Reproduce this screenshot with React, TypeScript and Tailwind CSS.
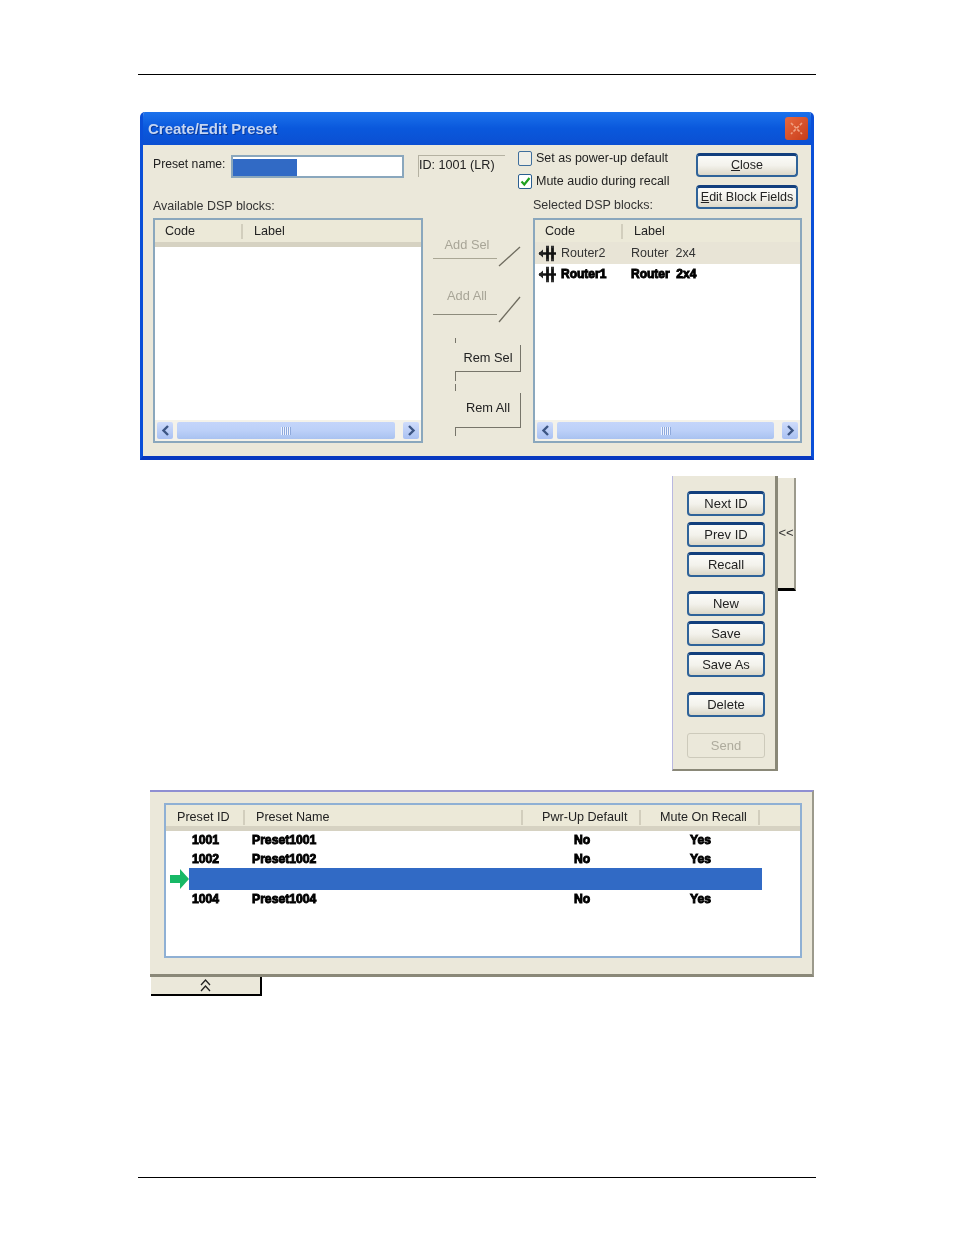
import React from "react";

const font = "font-['Liberation_Sans',Arial,sans-serif]";
const xpBtn =
  "flex items-center justify-center rounded-[4px] border-2 border-[#2f6399] border-t-[3px] border-t-[#123f7d] bg-gradient-to-b from-[#fbfbf8] via-[#f3f2ec] to-[#dcd8c9] text-[12.5px] text-[#222]";
const heavy = "font-bold text-black [-webkit-text-stroke:0.9px_black]";

function RouterIcon() {
  return (
    <svg width="19" height="19" viewBox="0 0 19 19" className="shrink-0">
      <path d="M1 9.5h17" stroke="#111" strokeWidth="2.6" />
      <path d="M5 5.5 0.5 9.5 5 13.5z" fill="#222" />
      <path d="M9.5 3v13M14.5 3v13" stroke="#111" strokeWidth="2.8" />
      <path d="M8 3h9M8 16h9" stroke="#333" strokeWidth="2.4" strokeDasharray="3 2" />
    </svg>
  );
}

function Scrollbar() {
  const arrowBtn = "flex h-[17px] w-[16px] items-center justify-center rounded-[2px] bg-gradient-to-b from-[#cfdcfb] to-[#a9c1f2]";
  return (
    <div className="flex h-[21px] items-center gap-[2px] bg-[#f4f2ea] px-[2px]">
      <div className={arrowBtn}>
        <svg width="9" height="11" viewBox="0 0 9 11"><path d="M7 1 2.5 5.5 7 10" fill="none" stroke="#3d5684" strokeWidth="2.4" /></svg>
      </div>
      <div className="ml-[2px] mr-[6px] flex h-[17px] flex-1 items-center justify-center rounded-[2px] bg-gradient-to-b from-[#c4d5fa] via-[#bcd0f8] to-[#a9c2f0]">
        <div className="h-[8px] w-[10px] bg-[repeating-linear-gradient(90deg,#eef3ff_0_1px,#8ea9dc_1px_2px)]" />
      </div>
      <div className={arrowBtn}>
        <svg width="9" height="11" viewBox="0 0 9 11"><path d="M2 1 6.5 5.5 2 10" fill="none" stroke="#3d5684" strokeWidth="2.4" /></svg>
      </div>
    </div>
  );
}

function HeaderCell({ w, label, sep = true, pad = "pl-[10px]" }: { w: string; label: string; sep?: boolean; pad?: string }) {
  return (
    <div className={`flex h-full items-center ${w}`}>
      <span className={`flex-1 truncate text-[12.6px] text-[#222] ${pad}`}>{label}</span>
      {sep && <span className="h-[15px] w-[2px] bg-[#d2cebd]" />}
    </div>
  );
}

function ListBox({ children, wide }: { children?: React.ReactNode; wide: boolean }) {
  return (
    <div className={`flex h-[225px] flex-col border-2 border-[#8aa7bd] bg-white ${wide ? "w-[270px]" : "w-[269px]"}`}>
      <div className="flex h-[22px] shrink-0 items-center bg-[#ece9d8]">
        <HeaderCell w="w-[88px]" label="Code" />
        <HeaderCell w="w-[120px]" label="Label" sep={false} pad="pl-[11px]" />
      </div>
      <div className="h-[5px] shrink-0 bg-[#d6d2c2]" />
      <div className="flex-1">{children}</div>
      <Scrollbar />
    </div>
  );
}

function Diagonal({ h }: { h: number }) {
  return (
    <svg width="24" height={h} viewBox={`0 0 24 ${h}`} className="shrink-0">
      <path d={`M1 ${h - 1}L22 1`} stroke="#6e6b5e" strokeWidth="1.3" />
    </svg>
  );
}

function Tick({ h }: { h: string }) {
  return <div className={`ml-[22px] w-px bg-[#77756a] ${h}`} />;
}

function Middle() {
  return (
    <div className="flex w-[110px] flex-col pl-[10px] pt-[19px]">
      <div className="flex h-[22px] items-start">
        <div className="flex h-[22px] w-[64px] justify-center border-b border-[#aaa795] pl-[4px] text-[12.8px] leading-[16px] text-[#a8a597]">Add Sel</div>
        <div className="ml-[1px] mt-[9px]"><Diagonal h={21} /></div>
      </div>
      <div className="mt-[28px] flex h-[28px] items-start">
        <div className="flex h-[28px] w-[64px] justify-center border-b border-[#8d8b7c] pl-[4px] pt-[1px] text-[12.8px] leading-[16px] text-[#a8a597]">Add All</div>
        <div className="ml-[1px] mt-[9px]"><Diagonal h={27} /></div>
      </div>
      <div className="mt-[23px]"><Tick h="h-[5px]" /></div>
      <div className="ml-[22px] mt-[2px] flex h-[27px] w-[66px] items-center justify-center border-b border-r border-[#77756a] pl-[1px] text-[12.8px] text-[#222]">Rem Sel</div>
      <Tick h="h-[9px]" />
      <div className="mt-[3px]"><Tick h="h-[7px]" /></div>
      <div className="ml-[22px] mt-[2px] flex h-[35px] w-[66px] items-center justify-center border-b border-r border-[#77756a] pb-[4px] pl-[1px] text-[12.8px] text-[#222]">Rem All</div>
      <Tick h="h-[8px]" />
    </div>
  );
}

function Dialog() {
  return (
    <div className="ml-[140px] mt-[37px] flex h-[348px] w-[674px] flex-col overflow-hidden rounded-t-[5px] border-x-[3px] border-b-[4px] border-x-[#0a4fd8] border-b-[#0738c0] bg-[#ebe8da] blur-[0.3px]">
      <div className="-mx-[3px] flex h-[33px] shrink-0 items-center justify-between bg-gradient-to-b from-[#1c72ec] via-[#0a58dc] to-[#0b4fd2] pl-[8px] pr-[6px]">
        <span className="pt-[2px] text-[15px] font-bold text-[#c5d6f2] [text-shadow:1px_1px_0_#0a3a9c]">Create/Edit Preset</span>
        <div className="flex h-[23px] w-[23px] items-center justify-center rounded-[3px] bg-gradient-to-br from-[#e8683e] to-[#c83c18]">
          <svg width="15" height="15" viewBox="0 0 15 15"><path d="M2 2l11 11M13 2l-11 11" stroke="#f0a283" strokeWidth="1.6" strokeDasharray="3 1.5" /></svg>
        </div>
      </div>
      <div className="flex h-[73px] shrink-0 pl-[10px]">
        <div className="flex w-[365px] flex-col pt-[10px]">
          <div className="flex h-[23px] items-start">
            <span className="w-[78px] text-[12.2px] text-[#222]">Preset name:</span>
            <div className="h-[23px] w-[173px] border-2 border-[#8aa7bd] bg-white pt-[2px]">
              <div className="h-full w-[64px] bg-[#316ac5]" />
            </div>
            <div className="ml-[14px] h-[22px] w-[87px] border-l border-t border-[#b5b2a2] text-[12.6px] text-[#222]">ID: 1001 (LR)</div>
          </div>
          <span className="mt-[19px] text-[12.5px] text-[#333]">Available DSP blocks:</span>
        </div>
        <div className="flex w-[178px] flex-col pt-[6px]">
          <label className="flex h-[15px] items-center gap-[4px] text-[12.5px] text-[#222]">
            <span className="h-[15px] w-[14px] rounded-[2px] border border-[#3f6f9d] bg-[#efeee6]" />
            Set as power-up default
          </label>
          <label className="mt-[8px] flex h-[15px] items-center gap-[4px] text-[12.5px] text-[#222]">
            <span className="flex h-[15px] w-[14px] items-center justify-center rounded-[2px] border border-[#2b5f90] bg-white">
              <svg width="11" height="11" viewBox="0 0 11 11"><path d="M1.5 5.5 4.3 8.5 9.5 2" fill="none" stroke="#21a121" strokeWidth="2.2" /></svg>
            </span>
            Mute audio during recall
          </label>
          <span className="ml-[15px] mt-[7px] text-[12.5px] text-[#333]">Selected DSP blocks:</span>
        </div>
        <div className="flex flex-col gap-[8px] pt-[8px]">
          <div className={`${xpBtn} h-[24px] w-[102px]`}><span><span className="underline">C</span>lose</span></div>
          <div className={`${xpBtn} h-[24px] w-[102px]`}><span><span className="underline">E</span>dit Block Fields</span></div>
        </div>
      </div>
      <div className="flex pl-[10px]">
        <ListBox wide />
        <Middle />
        <ListBox wide={false}>
          <div className="-mt-[5px] flex h-[22px] items-center bg-[#e8e4d6] pl-[3px] text-[12.5px] text-[#333]">
            <RouterIcon />
            <span className="w-[74px] pl-[4px]">Router2</span>
            <span>Router&nbsp; 2x4</span>
          </div>
          <div className={`flex h-[20px] items-center pl-[3px] text-[12px] ${heavy}`}>
            <RouterIcon />
            <span className="w-[74px] pl-[4px]">Router1</span>
            <span>Router&nbsp; 2x4</span>
          </div>
        </ListBox>
      </div>
    </div>
  );
}

function Btn({ label, cls, disabled }: { label: string; cls: string; disabled?: boolean }) {
  return disabled ? (
    <div className={`flex h-[25px] w-[78px] items-center justify-center rounded-[3px] border border-[#cdcabb] text-[13px] text-[#aeab9d] ${cls}`}>{label}</div>
  ) : (
    <div className={`${xpBtn} h-[25px] w-[78px] !text-[13px] ${cls}`}>{label}</div>
  );
}

function SidePanel() {
  return (
    <div className="ml-[672px] mt-[16px] flex items-start blur-[0.3px]">
      <div className="flex h-[295px] w-[106px] flex-col border-b-[2px] border-l border-r-[3px] border-b-[#8a8878] border-l-[#b9b8e0] border-r-[#8a8878] bg-[#ebe8da] pl-[14px] pt-[15px]">
        <Btn label="Next ID" cls="" />
        <Btn label="Prev ID" cls="mt-[6px]" />
        <Btn label="Recall" cls="mt-[5px]" />
        <Btn label="New" cls="mt-[14px]" />
        <Btn label="Save" cls="mt-[5px]" />
        <Btn label="Save As" cls="mt-[6px]" />
        <Btn label="Delete" cls="mt-[15px]" />
        <Btn label="Send" cls="mt-[16px]" disabled />
      </div>
      <div className="mt-[2px] flex h-[113px] w-[18px] items-center justify-center border-b-[3px] border-r-2 border-b-black border-r-[#9c9a8c] bg-[#ebe8da] text-[13px] text-[#333]">
        &lt;&lt;
      </div>
    </div>
  );
}

function Row({ id, name, pwr, mute, h }: { id: string; name: string; pwr: string; mute: string; h: string }) {
  return (
    <div className={`flex items-center pl-[26px] text-[12.2px] ${h} ${heavy}`}>
      <span className="w-[60px]">{id}</span>
      <span className="w-[322px]">{name}</span>
      <span className="w-[116px]">{pwr}</span>
      <span>{mute}</span>
    </div>
  );
}

function PresetTable() {
  return (
    <div className="mt-[19px] blur-[0.3px]">
      <div className="ml-[150px] h-[187px] w-[664px] border-b-[3px] border-r-2 border-t-2 border-b-[#8a8878] border-r-[#9c9a8c] border-t-[#8f8fd2] bg-[#ebe8da] pl-[14px] pt-[11px]">
        <div className="flex h-[155px] w-[638px] flex-col border-2 border-[#8fb0d4] bg-white">
          <div className="flex h-[21px] shrink-0 items-center bg-[#ece9d8] pt-[3px]">
            <HeaderCell w="w-[79px]" label="Preset ID" pad="pl-[11px]" />
            <HeaderCell w="w-[278px]" label="Preset Name" pad="pl-[11px]" />
            <HeaderCell w="w-[118px]" label="Pwr-Up Default" pad="pl-[19px]" />
            <HeaderCell w="w-[119px]" label="Mute On Recall" pad="pl-[19px]" />
          </div>
          <div className="h-[5px] shrink-0 bg-[#d6d2c2]" />
          <Row id="1001" name="Preset1001" pwr="No" mute="Yes" h="h-[19px]" />
          <Row id="1002" name="Preset1002" pwr="No" mute="Yes" h="h-[18px]" />
          <div className="flex h-[22px] items-center pl-[4px]">
            <svg width="19" height="20" viewBox="0 0 19 20" className="shrink-0">
              <path d="M0 6h10V0l9 10-9 10v-6H0z" fill="#17b866" />
            </svg>
            <div className="h-[22px] w-[573px] bg-[#316ac5]" />
          </div>
          <Row id="1004" name="Preset1004" pwr="No" mute="Yes" h="h-[19px]" />
        </div>
      </div>
      <div className="ml-[151px] flex h-[19px] w-[111px] items-center justify-center border-b-2 border-r-2 border-black bg-[#ebe8da]">
        <svg width="11" height="14" viewBox="0 0 11 14">
          <path d="M1 6l4.5-5L10 6M1 12l4.5-5L10 12" fill="none" stroke="#222" strokeWidth="1.3" />
        </svg>
      </div>
    </div>
  );
}

export default function App() {
  return (
    <div className={`flex h-[1235px] w-[954px] flex-col bg-white pt-[74px] ${font}`}>
      <div className="ml-[138px] h-px w-[678px] bg-black" />
      <Dialog />
      <SidePanel />
      <PresetTable />
      <div className="ml-[138px] mt-[181px] h-px w-[678px] bg-black" />
    </div>
  );
}
